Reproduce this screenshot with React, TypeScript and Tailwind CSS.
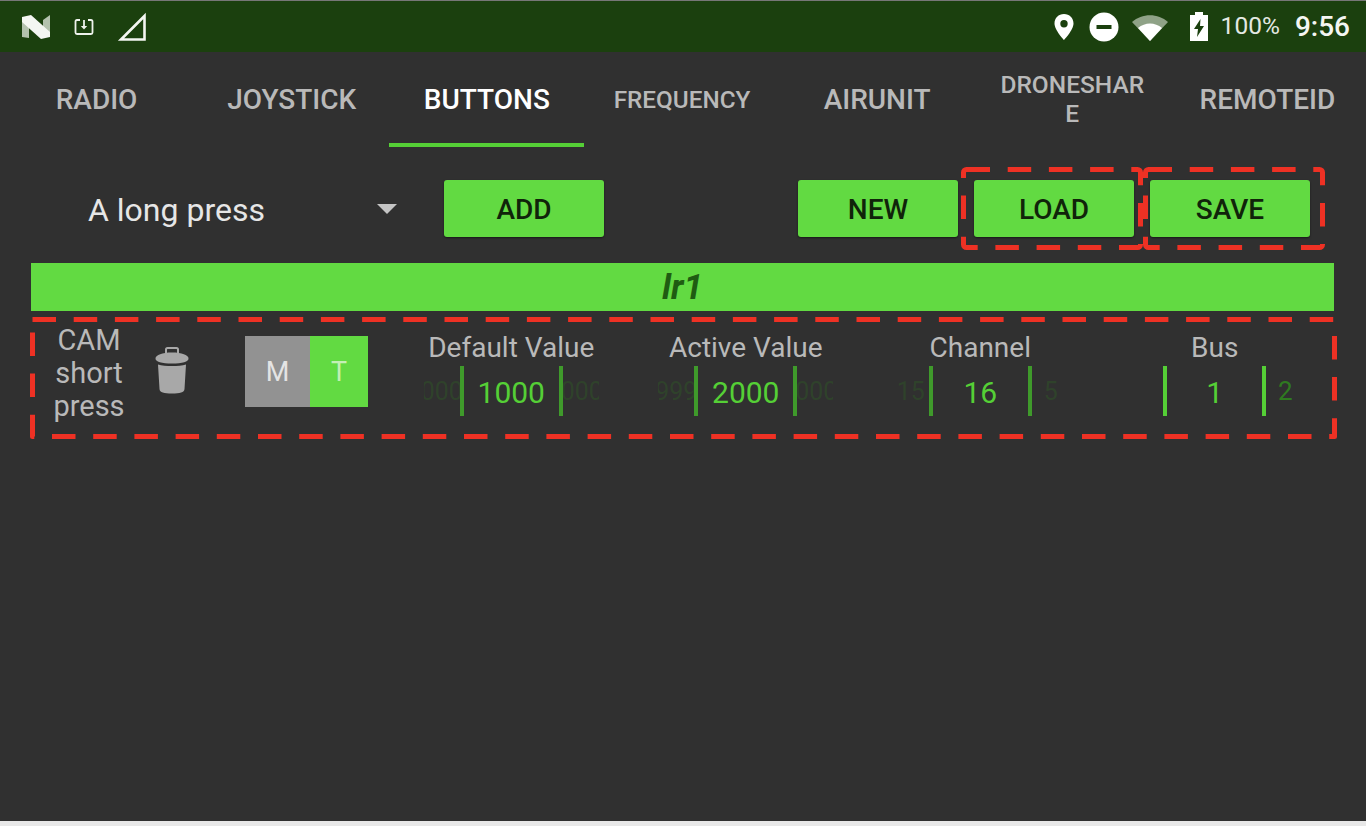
import React from 'react';

const tabs = ['RADIO', 'JOYSTICK', 'BUTTONS', 'FREQUENCY', 'AIRUNIT', 'DRONESHARE', 'REMOTEID'];

const NLogo = () => (
  <svg width="30" height="26" viewBox="0 0 30 26" className="ml-[21px]">
    <path d="M1 3 L8 6 V24 L1 23 Z" fill="#b4c2ae" />
    <path d="M22 6 L29 1 V23 L22 20 Z" fill="#b4c2ae" />
    <path d="M1 3 L10 1 L29 18 V23 L20 25 L1 8 Z" fill="#f4f6f2" />
  </svg>
);

const DownloadIcon = () => (
  <svg width="20" height="18" viewBox="0 0 20 18" className="ml-[23px]" fill="none" stroke="#eef2ec" strokeWidth="1.8">
    <path d="M6 2 H3 Q1.5 2 1.5 3.5 V14.5 Q1.5 16 3 16 H17 Q18.5 16 18.5 14.5 V3.5 Q18.5 2 17 2 H14" />
    <path d="M10 2 V10" />
    <path d="M6.8 8 L10 11.5 L13.2 8 Z" fill="#eef2ec" stroke="none" />
  </svg>
);

const SignalIcon = () => (
  <svg width="30" height="30" viewBox="0 0 30 30" className="ml-[23px]" fill="none" stroke="#f4f6f2" strokeWidth="2.6">
    <path d="M27.5 4 V27.5 H4 Z" />
  </svg>
);

const PinIcon = () => (
  <svg width="22" height="28" viewBox="0 0 22 28">
    <path fillRule="evenodd" d="M11 1 C5.5 1 1.5 5 1.5 10.5 C1.5 17 11 27 11 27 C11 27 20.5 17 20.5 10.5 C20.5 5 16.5 1 11 1 Z M11 7 A3.7 3.7 0 1 1 11 14.4 A3.7 3.7 0 1 1 11 7 Z" fill="#fff" />
  </svg>
);

const DndIcon = () => (
  <svg width="30" height="30" viewBox="0 0 30 30" className="ml-[14px]">
    <circle cx="15" cy="15" r="14.5" fill="#fff" />
    <rect x="7.5" y="13" width="15" height="4" fill="#1b400e" />
  </svg>
);

const WifiIcon = () => (
  <svg width="36" height="28" viewBox="0 0 36 28" className="ml-[13px]">
    <path d="M0 9 C10 0 26 0 36 9 L18 28 Z" fill="#8fa287" />
    <path d="M6 15 C13 9 23 9 30 15 L18 28 Z" fill="#fff" />
  </svg>
);

const BatteryIcon = () => (
  <svg width="20" height="30" viewBox="0 0 20 30" className="ml-[21px]">
    <path fillRule="evenodd" d="M6 0 H14 V3 H19 V29 H1 V3 H6 Z M11.5 7 L5 17 H9 L8 25 L15 14 H11 Z" fill="#fff" />
  </svg>
);

const TrashIcon = () => (
  <svg width="34" height="47" viewBox="0 0 34 47">
    <path d="M11 7 V2.5 Q11 1 12.5 1 H21.5 Q23 1 23 2.5 V7" fill="none" stroke="#a8a8a8" strokeWidth="2" />
    <path d="M17 5.5 C7 5.5 1 8 0.5 11 C0 15 7 16.5 17 16.5 C27 16.5 34 15 33.5 11 C33 8 27 5.5 17 5.5 Z" fill="#a8a8a8" />
    <path d="M3 17.5 C10 19.5 24 19.5 31 17.5 L29.5 42 C29.3 45.5 25 46.5 17 46.5 C9 46.5 4.7 45.5 4.5 42 Z" fill="#a8a8a8" />
  </svg>
);

type PickerProps = { label: string; value: string; prev: string; next: string; dim?: boolean };

const Picker = ({ label, value, prev, next, dim }: PickerProps) => (
  <div className="flex flex-col items-center w-[234.5px]">
    <div className="text-[28px] leading-[32px] text-[#b9b9b9] mt-[12px]">{label}</div>
    <div className="flex items-center mt-[1px] h-[52px]">
      <div className="w-[36px] ml-[4px] flex justify-center overflow-hidden text-[25px] text-[#2f6c22] opacity-30 blur-[0.6px] whitespace-nowrap pt-[1px]">{prev}</div>
      <div className={dim ? 'w-[103px] h-[50px] border-x-[4px] border-[#3f9a2b] flex items-center justify-center pt-[2px]' : 'w-[103px] h-[50px] border-x-[4px] border-[#55cf36] flex items-center justify-center pt-[2px]'}>
        <span className="text-[30px] text-[#55cf36]">{value}</span>
      </div>
      <div className={dim ? 'w-[36px] mr-[4px] pl-[2px] flex justify-center overflow-hidden text-[25px] text-[#2f6c22] opacity-30 blur-[0.6px] whitespace-nowrap pt-[1px]' : 'w-[36px] mr-[4px] pl-[2px] flex justify-center overflow-hidden text-[26px] text-[#2f7a20] whitespace-nowrap pt-[1px]'}>{next}</div>
    </div>
  </div>
);

const ActionButton = ({ text, className }: { text: string; className?: string }) => (
  <button className={`h-[57px] w-[160px] pt-[3px] rounded-[3px] bg-[#62da42] text-[28px] font-medium text-[#10240a] shadow-[0_1px_2px_rgba(0,0,0,0.5)] ${className ?? ''}`}>
    {text}
  </button>
);

const Annotation = ({ className, w, h, rx }: { className: string; w: number; h: number; rx: number }) => (
  <svg className={`absolute ${className}`} width={w} height={h} viewBox={`0 0 ${w} ${h}`} fill="none">
    <rect x="2.5" y="2.5" width={w - 5} height={h - 5} rx={rx} stroke="#ee3124" strokeWidth="5" strokeLinejoin="round" strokeDasharray="23.5 17.7" />
  </svg>
);

export default function App() {
  return (
    <div className="relative w-[1366px] h-[826px] overflow-hidden bg-[#303030] font-['Roboto',sans-serif] flex flex-col">
      {/* status bar */}
      <div className="h-[52px] shrink-0 bg-[#1b400e] border-t border-[#777] flex items-center justify-between">
        <div className="flex items-center">
          <NLogo />
          <DownloadIcon />
          <SignalIcon />
        </div>
        <div className="flex items-center pr-[16px]">
          <PinIcon />
          <DndIcon />
          <WifiIcon />
          <BatteryIcon />
          <span className="ml-[12px] text-[24.5px] text-[#e4e9e2]">100%</span>
          <span className="ml-[15px] text-[28px] font-medium text-[#f4f6f2]">9:56</span>
        </div>
      </div>

      {/* tabs */}
      <div className="grid grid-cols-7 h-[95px] w-[1366px] -ml-[1px] shrink-0">
        {tabs.map((t) => (
          <div key={t} className={t === 'BUTTONS' ? 'flex items-center justify-center border-b-[4px] border-[#55cf36] pt-[5px]' : 'flex items-center justify-center border-b-[4px] border-transparent pt-[5px]'}>
            <span className={
              t === 'BUTTONS'
                ? 'text-[28px] font-medium text-white'
                : t === 'FREQUENCY'
                  ? 'text-[24.3px] font-medium text-[#b9b9b9]'
                  : t === 'DRONESHARE'
                    ? 'text-[24.5px] leading-[29px] font-medium text-[#b9b9b9] text-center w-[150px] break-all -mt-[2px]'
                    : 'text-[28px] font-medium text-[#b9b9b9]'
            }>{t}</span>
          </div>
        ))}
      </div>

      {/* selector and actions */}
      <div className="flex items-center h-[57px] mt-[33px] shrink-0 pl-[88px]">
        <span className="text-[32px] pt-[3px] text-[#e6e6e6] w-[290px]">A long press</span>
        <svg width="20" height="10" viewBox="0 0 20 10" className="ml-[-1px]"><path d="M0 0 H20 L10 10 Z" fill="#c4c4c4" /></svg>
        <ActionButton text="ADD" className="ml-[47px]" />
        <ActionButton text="NEW" className="ml-[194px]" />
        <ActionButton text="LOAD" className="ml-[16px]" />
        <ActionButton text="SAVE" className="ml-[16px]" />
      </div>

      {/* config title */}
      <div className="ml-[31px] mr-[32px] mt-[26px] h-[48px] pt-[3px] shrink-0 bg-[#62da42] flex items-center justify-center text-[35px] font-bold italic text-[#1f5c12]">
        lr1
      </div>

      {/* mapping row */}
      <div className="flex h-[116px] mt-[9px] shrink-0 pl-[34px]">
        <div className="w-[110px] mt-[4px] text-center text-[29px] leading-[33px] text-[#b9b9b9]">CAM<br />short<br />press</div>
        <div className="ml-[11px] mt-[27px]"><TrashIcon /></div>
        <div className="ml-[56px] mt-[16px] flex h-[71px] w-[123px] text-[27px]">
          <div className="w-[65px] pt-[2px] bg-[#929292] text-[#e4e4e4] flex items-center justify-center">M</div>
          <div className="w-[58px] pt-[2px] bg-[#62da42] text-[#c4efb6] flex items-center justify-center">T</div>
        </div>
        <div className="ml-[26px] flex">
          <Picker label="Default Value" value="1000" prev="000" next="000" dim />
          <Picker label="Active Value" value="2000" prev="999" next="000" dim />
          <Picker label="Channel" value="16" prev="15" next="5" dim />
          <Picker label="Bus" value="1" prev="" next="2" />
        </div>
      </div>

      <div className="absolute left-0 right-0 bottom-0 h-[5px] bg-[#e8e8e8]" />

      {/* red annotation boxes */}
      <Annotation className="left-[961px] top-[167px]" w={182} h={83} rx={3} />
      <Annotation className="left-[1143px] top-[167px]" w={182} h={83} rx={3} />
      <Annotation className="left-[30px] top-[317px]" w={1307} h={122} rx={0} />
    </div>
  );
}
